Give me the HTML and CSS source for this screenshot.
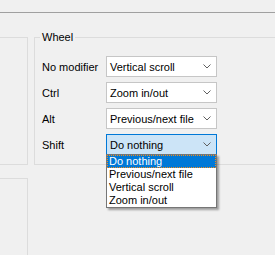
FILE: index.html
```html
<!DOCTYPE html>
<html lang="en">
<head>
    <meta charset="UTF-8">
    <meta name="viewport" content="width=device-width, initial-scale=1.0">
    <title>Mouse settings</title>
    <link rel="stylesheet" href="styles.css">
</head>
<body>

    <div class="tabbar"></div>

    <div class="pane">
        <div class="side">
            <div class="group side-top"></div>
            <div class="group side-bottom"></div>
        </div>

        <div class="group wheel">
            <span class="title">Wheel</span>
            <div class="rows">
                <div class="row">
                    <span class="label">No modifier</span>
                    <div class="combo">
                        <span class="value">Vertical scroll</span>
                        <svg class="chevron" width="8" height="5" viewBox="0 0 8 5"><path d="M0.5 0.5 L4 4 L7.5 0.5" /></svg>
                    </div>
                </div>
                <div class="row">
                    <span class="label">Ctrl</span>
                    <div class="combo">
                        <span class="value">Zoom in/out</span>
                        <svg class="chevron" width="8" height="5" viewBox="0 0 8 5"><path d="M0.5 0.5 L4 4 L7.5 0.5" /></svg>
                    </div>
                </div>
                <div class="row">
                    <span class="label">Alt</span>
                    <div class="combo">
                        <span class="value">Previous/next file</span>
                        <svg class="chevron" width="8" height="5" viewBox="0 0 8 5"><path d="M0.5 0.5 L4 4 L7.5 0.5" /></svg>
                    </div>
                </div>
                <div class="row">
                    <span class="label">Shift</span>
                    <div class="combo open">
                        <span class="value">Do nothing</span>
                        <svg class="chevron" width="8" height="5" viewBox="0 0 8 5"><path d="M0.5 0.5 L4 4 L7.5 0.5" /></svg>
                        <ul class="popup">
                            <li class="current">Do nothing</li>
                            <li>Previous/next file</li>
                            <li>Vertical scroll</li>
                            <li>Zoom in/out</li>
                        </ul>
                    </div>
                </div>
            </div>
        </div>
    </div>

</body>
</html>
```

FILE: styles.css
```css
* {
    box-sizing: border-box;
}

html, body {
    margin: 0;
    height: 100%;
    overflow: hidden;
    background-color: #f0f0f0;
    font-family: "Liberation Sans", Arial, sans-serif;
    font-size: 11px;
    color: #000;
}

body {
    display: flex;
    flex-direction: column;
}

.tabbar {
    height: 12px;
    flex: none;
}

.pane {
    flex: 1;
    min-height: 0;
    display: flex;
    gap: 6px;
    border-top: 1px solid #a0a0a0;
    padding-top: 24px;
}

.group {
    border: 1px solid #dcdcdc;
}

/* left column, cut off by the window edge */
.side {
    display: flex;
    flex-direction: column;
    gap: 13px;
    width: 28px;
    flex: none;
}
.side > .group {
    border-left: none;
}
.side-top {
    height: 128px;
}
.side-bottom {
    flex: 1;
    border-bottom: none;
}

/* runs off the right edge */
.wheel {
    flex: 1;
    align-self: flex-start;
    border-right: none;
}

.wheel > .title {
    display: block;
    width: fit-content;
    margin: -7px 0 0 5px;
    padding: 0 2px;
    line-height: 13px;
    background-color: #f0f0f0;
}

.rows {
    display: flex;
    flex-direction: column;
    gap: 5px;
    padding: 12px 0 9px 7px;
}

.row {
    display: flex;
    align-items: center;
}

.label {
    width: 64px;
}

.combo {
    position: relative;
    display: flex;
    align-items: center;
    justify-content: space-between;
    width: 111px;
    height: 21px;
    padding: 0 3px 0 3px;
    background-color: #fff;
    border: 1px solid #c6c6c6;
}

.chevron {
    margin-right: 2px;
}
.chevron path {
    fill: none;
    stroke: #606060;
    stroke-width: 1;
}

.combo.open {
    background-color: #cce4f7;
    border-color: #0078d7;
}

.popup {
    position: absolute;
    top: 19px;
    left: -1px;
    width: 111px;
    margin: 0;
    padding: 0;
    list-style: none;
    background-color: #fff;
    border: 1px solid #767676;
    box-shadow: 2px 2px 2px rgba(0, 0, 0, 0.35);
}

.popup li {
    height: 13px;
    line-height: 13px;
    padding-left: 2px;
}

.popup li.current {
    background-color: #0078d7;
    color: #fff;
    outline: 1px dotted #f08c1e;
    outline-offset: -1px;
}
```
